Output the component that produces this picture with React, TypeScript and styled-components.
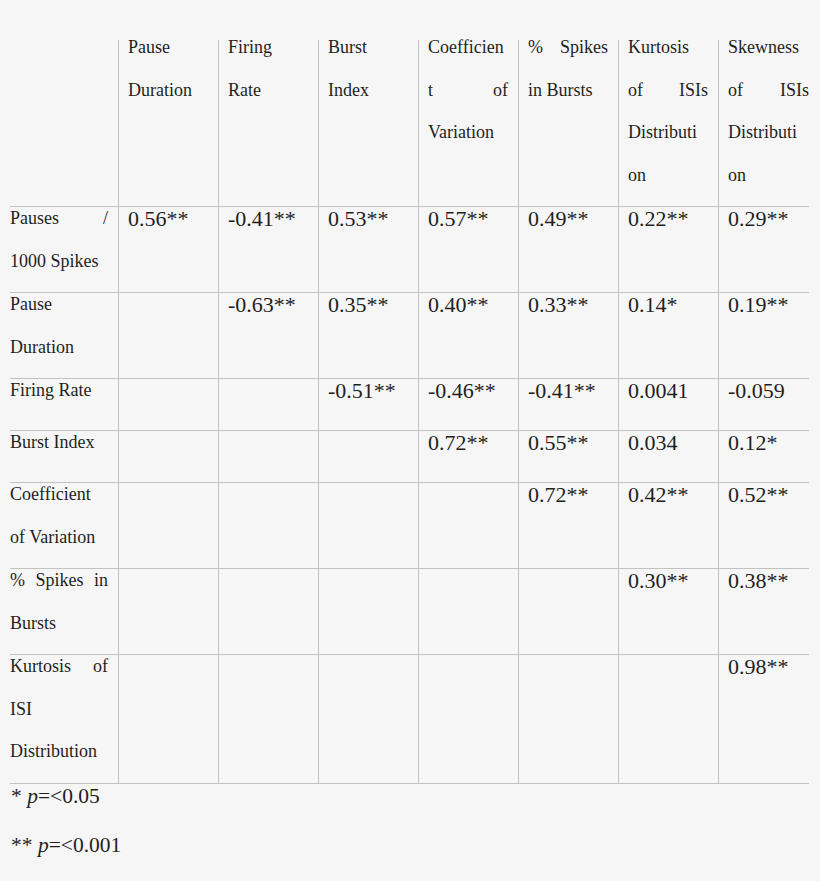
import React from "react";
import styled, { createGlobalStyle } from "styled-components";

const GlobalStyle = createGlobalStyle`
  html, body {
    margin: 0;
    padding: 0;
    background: #f6f6f6;
  }
  body {
    font-family: "Liberation Serif", "Times New Roman", serif;
    color: #1f1f1f;
  }
`;

const Page = styled.div`
  width: 820px;
  min-height: 881px;
  box-sizing: border-box;
  padding: 40px 0 0 10px;
  background: #f6f6f6;
`;

const Table = styled.div`
  display: flex;
  flex-direction: column;
  width: 799px;
`;

const Row = styled.div`
  display: grid;
  grid-template-columns: 108px repeat(6, 100px) 91px;
  border-bottom: 1px solid #c2c2c2;
`;

const Cell = styled.div<{ $first?: boolean; $last?: boolean }>`
  box-sizing: border-box;
  min-width: 0;
  border-left: ${(p) => (p.$first ? "none" : "1px solid #c2c2c2")};
  padding-left: ${(p) => (p.$first ? "0" : "9px")};
  padding-right: ${(p) => (p.$last ? "0" : "10px")};
`;

const HeaderText = styled.div`
  margin-top: -4px;
`;

const Line = styled.div<{ $justify?: boolean }>`
  height: 42.5px;
  font-size: 18px;
  line-height: 22px;
  white-space: nowrap;
  text-align: ${(p) => (p.$justify ? "justify" : "left")};
  text-align-last: ${(p) => (p.$justify ? "justify" : "left")};
`;

const Value = styled.div`
  height: 51px;
  font-size: 22px;
  line-height: 24px;
  white-space: nowrap;
`;

const Notes = styled.div`
  padding-left: 1px;
`;

const Note = styled.div`
  height: 49px;
  font-size: 21.5px;
  line-height: 24px;
`;

const P = styled.i`
  font-style: italic;
`;

type L = { t: string; j?: boolean };

const headers: L[][] = [
  [],
  [{ t: "Pause" }, { t: "Duration" }],
  [{ t: "Firing" }, { t: "Rate" }],
  [{ t: "Burst" }, { t: "Index" }],
  [{ t: "Coefficien" }, { t: "t of", j: true }, { t: "Variation" }],
  [{ t: "% Spikes", j: true }, { t: "in Bursts" }],
  [{ t: "Kurtosis" }, { t: "of ISIs", j: true }, { t: "Distributi" }, { t: "on" }],
  [{ t: "Skewness" }, { t: "of ISIs", j: true }, { t: "Distributi" }, { t: "on" }],
];

const rows: { label: L[]; values: string[] }[] = [
  {
    label: [{ t: "Pauses /", j: true }, { t: "1000 Spikes" }],
    values: ["0.56**", "-0.41**", "0.53**", "0.57**", "0.49**", "0.22**", "0.29**"],
  },
  {
    label: [{ t: "Pause" }, { t: "Duration" }],
    values: ["", "-0.63**", "0.35**", "0.40**", "0.33**", "0.14*", "0.19**"],
  },
  {
    label: [{ t: "Firing Rate" }],
    values: ["", "", "-0.51**", "-0.46**", "-0.41**", "0.0041", "-0.059"],
  },
  {
    label: [{ t: "Burst Index" }],
    values: ["", "", "", "0.72**", "0.55**", "0.034", "0.12*"],
  },
  {
    label: [{ t: "Coefficient" }, { t: "of Variation" }],
    values: ["", "", "", "", "0.72**", "0.42**", "0.52**"],
  },
  {
    label: [{ t: "% Spikes in", j: true }, { t: "Bursts" }],
    values: ["", "", "", "", "", "0.30**", "0.38**"],
  },
  {
    label: [{ t: "Kurtosis of", j: true }, { t: "ISI" }, { t: "Distribution" }],
    values: ["", "", "", "", "", "", "0.98**"],
  },
];

const Lines = ({ lines }: { lines: L[] }) => (
  <>
    {lines.map((l, i) => (
      <Line key={i} $justify={l.j}>
        {l.t}
      </Line>
    ))}
  </>
);

export default function App() {
  return (
    <>
      <GlobalStyle />
      <Page>
        <Table>
          <Row>
            {headers.map((h, i) => (
              <Cell key={i} $first={i === 0} $last={i === headers.length - 1}>
                <HeaderText>
                  <Lines lines={h} />
                </HeaderText>
              </Cell>
            ))}
          </Row>
          {rows.map((r, ri) => (
            <Row key={ri}>
              <Cell $first>
                <Lines lines={r.label} />
              </Cell>
              {r.values.map((v, vi) => (
                <Cell key={vi} $last={vi === r.values.length - 1}>
                  {v && <Value>{v}</Value>}
                </Cell>
              ))}
            </Row>
          ))}
        </Table>
        <Notes>
          <Note>
            * <P>p</P>=&lt;0.05
          </Note>
          <Note>
            ** <P>p</P>=&lt;0.001
          </Note>
        </Notes>
      </Page>
    </>
  );
}
